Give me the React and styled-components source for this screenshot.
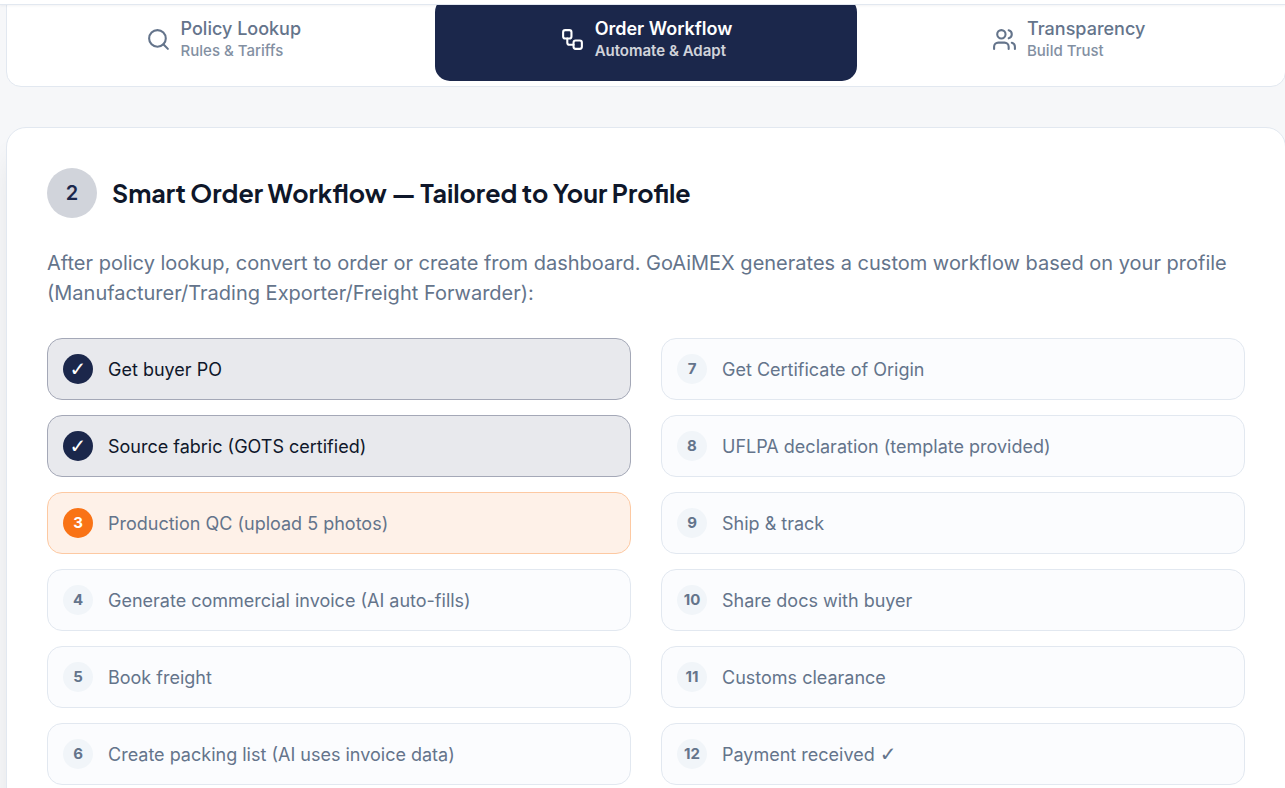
import React from 'react';
import styled, { createGlobalStyle, css } from 'styled-components';
import { Search, Users, Workflow } from 'lucide-react';

const GlobalStyle = createGlobalStyle`
  :root {
    --navy: #1b274b;
    --ink: #0f172a;
    --slate: #64748b;
    --line: #e2e8f0;
    --orange: #f97316;
  }

  * {
    box-sizing: border-box;
  }

  body {
    margin: 0;
    background-color: #f6f7f9;
    color: var(--slate);
    font-family: Inter, 'Liberation Sans', sans-serif;
  }
`;

const Page = styled.div`
  height: 100vh;
  overflow: hidden;
`;

const TopBar = styled.header`
  position: relative;
  z-index: 1;
  height: 5px;
  background-color: white;
  border-bottom: 1px solid var(--line);
  box-shadow: 0 1px 3px rgba(15, 23, 42, 0.05);
`;

const Content = styled.main`
  margin: -14px -1px 0 6px;
  display: flex;
  flex-direction: column;
  gap: 40px;
`;

const Tabs = styled.nav`
  display: grid;
  grid-template-columns: repeat(3, 1fr);
  padding: 5px;
  background-color: white;
  border: 1px solid var(--line);
  border-radius: 15px;
`;

const Tab = styled.button`
  display: flex;
  align-items: center;
  justify-content: center;
  gap: 10px;
  padding: 20px;
  border: 0;
  border-radius: 15px;
  background-color: ${({ $active }) => ($active ? 'var(--navy)' : 'transparent')};
  color: ${({ $active }) => ($active ? 'white' : 'var(--slate)')};
  font-family: inherit;
  font-weight: ${({ $active }) => ($active ? 600 : 500)};
  text-align: left;
  cursor: pointer;
`;

const TabText = styled.span`
  display: flex;
  flex-direction: column;
`;

const TabTitle = styled.span`
  font-size: 18px;
  line-height: 24px;
`;

const TabSubtitle = styled.span`
  font-size: 15px;
  line-height: 20px;
  opacity: 0.8;
`;

const Card = styled.section`
  padding: 40px;
  background-color: white;
  border: 1px solid var(--line);
  border-radius: 20px;
  box-shadow: 0 25px 30px -6px rgba(0, 0, 0, 0.1);
`;

const CardHeader = styled.div`
  display: flex;
  align-items: center;
  gap: 15px;
  margin-bottom: 30px;
`;

const SectionNumber = styled.span`
  display: grid;
  place-items: center;
  width: 50px;
  height: 50px;
  border-radius: 50%;
  background-color: #d1d4db;
  color: var(--navy);
  font-size: 20px;
  font-weight: 600;
`;

const Heading = styled.h2`
  margin: 0;
  color: var(--ink);
  font-family: 'Plus Jakarta Sans', Inter, sans-serif;
  font-size: 25px;
  font-weight: 700;
  line-height: 30px;
`;

const Intro = styled.p`
  margin: 0 0 30px;
  font-size: 20px;
  line-height: 30px;
`;

const Steps = styled.ol`
  display: grid;
  grid-auto-flow: column;
  grid-template-rows: repeat(6, auto);
  grid-template-columns: 1fr 1fr;
  gap: 15px 30px;
  margin: 0;
  padding: 0;
  list-style: none;
`;

const stepColors = {
  done: css`
    background-color: #e8e9ed;
    border-color: #a4a8b7;
    color: var(--ink);
  `,
  current: css`
    background-color: #fef1e8;
    border-color: #fdc9a2;
  `,
  todo: css`
    background-color: #fbfcfe;
    border-color: var(--line);
  `,
};

const Step = styled.li`
  display: flex;
  align-items: center;
  gap: 15px;
  padding: 15px;
  border: 1px solid;
  border-radius: 15px;
  font-size: 18px;
  line-height: 29px;
  ${({ $status }) => stepColors[$status]}
`;

const badgeColors = {
  done: 'var(--navy)',
  current: 'var(--orange)',
  todo: '#f1f5f9',
};

const StepBadge = styled.span`
  display: grid;
  place-items: center;
  flex-shrink: 0;
  width: 30px;
  height: 30px;
  border-radius: 50%;
  background-color: ${({ $status }) => badgeColors[$status]};
  color: ${({ $status }) => ($status === 'todo' ? 'var(--slate)' : 'white')};
  font-size: 15px;
  font-weight: 700;
  line-height: 28px;
`;

const Tick = styled.span`
  font-family: 'DejaVu Sans', sans-serif;
  font-size: 20px;
  line-height: 20px;
`;

const tabs = [
  { title: 'Policy Lookup', subtitle: 'Rules & Tariffs', icon: Search },
  { title: 'Order Workflow', subtitle: 'Automate & Adapt', icon: Workflow, active: true },
  { title: 'Transparency', subtitle: 'Build Trust', icon: Users },
];

const steps = [
  { label: 'Get buyer PO' },
  { label: 'Source fabric (GOTS certified)' },
  { label: 'Production QC (upload 5 photos)' },
  { label: 'Generate commercial invoice (AI auto-fills)' },
  { label: 'Book freight' },
  { label: 'Create packing list (AI uses invoice data)' },
  { label: 'Get Certificate of Origin' },
  { label: 'UFLPA declaration (template provided)' },
  { label: 'Ship & track' },
  { label: 'Share docs with buyer' },
  { label: 'Customs clearance' },
  { label: 'Payment received', ticked: true },
];

const CURRENT_STEP = 3;

function getStatus(number) {
  if (number < CURRENT_STEP) return 'done';
  return number === CURRENT_STEP ? 'current' : 'todo';
}

function WorkflowSteps() {
  return (
    <Steps>
      {steps.map(({ label, ticked }, index) => {
        const number = index + 1;
        const status = getStatus(number);
        return (
          <Step key={label} $status={status}>
            <StepBadge $status={status}>{status === 'done' ? <Tick>✓</Tick> : number}</StepBadge>
            <span>
              {label} {ticked && <Tick>✓</Tick>}
            </span>
          </Step>
        );
      })}
    </Steps>
  );
}

export default function App() {
  return (
    <Page>
      <GlobalStyle />
      <TopBar />
      <Content>
        <Tabs>
          {tabs.map(({ title, subtitle, icon: Icon, active }) => (
            <Tab key={title} type="button" $active={active}>
              <Icon size={25} aria-hidden="true" />
              <TabText>
                <TabTitle>{title}</TabTitle>
                <TabSubtitle>{subtitle}</TabSubtitle>
              </TabText>
            </Tab>
          ))}
        </Tabs>
        <Card>
          <CardHeader>
            <SectionNumber>2</SectionNumber>
            <Heading>Smart Order Workflow — Tailored to Your Profile</Heading>
          </CardHeader>
          <Intro>
            After policy lookup, convert to order or create from dashboard. GoAiMEX generates a custom
            workflow based on your profile (Manufacturer/Trading Exporter/Freight Forwarder):
          </Intro>
          <WorkflowSteps />
        </Card>
      </Content>
    </Page>
  );
}
